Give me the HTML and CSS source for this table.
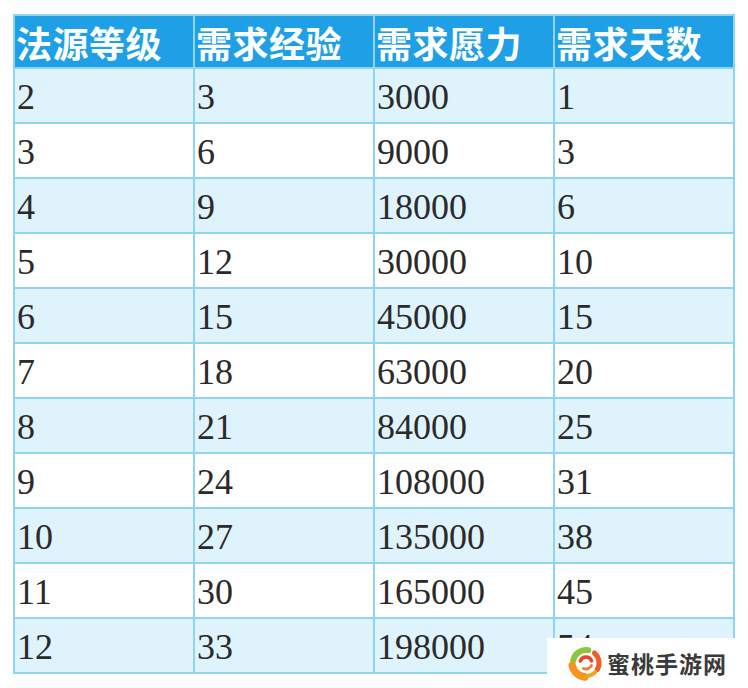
FILE: index.html
```html
<!DOCTYPE html>
<html lang="zh">
<head>
<meta charset="utf-8">
<link rel="stylesheet" href="styles.css">
</head>
<body>
<div class="page">
  <table class="levels">
    <thead>
      <tr><th>法源等级</th><th>需求经验</th><th>需求愿力</th><th>需求天数</th></tr>
    </thead>
    <tbody>
      <tr><td>2</td><td>3</td><td>3000</td><td>1</td></tr>
      <tr><td>3</td><td>6</td><td>9000</td><td>3</td></tr>
      <tr><td>4</td><td>9</td><td>18000</td><td>6</td></tr>
      <tr><td>5</td><td>12</td><td>30000</td><td>10</td></tr>
      <tr><td>6</td><td>15</td><td>45000</td><td>15</td></tr>
      <tr><td>7</td><td>18</td><td>63000</td><td>20</td></tr>
      <tr><td>8</td><td>21</td><td>84000</td><td>25</td></tr>
      <tr><td>9</td><td>24</td><td>108000</td><td>31</td></tr>
      <tr><td>10</td><td>27</td><td>135000</td><td>38</td></tr>
      <tr><td>11</td><td>30</td><td>165000</td><td>45</td></tr>
      <tr><td>12</td><td>33</td><td>198000</td><td>54</td></tr>
    </tbody>
  </table>
  <div class="watermark">
    <svg class="logo" width="38" height="38" viewBox="0 0 38 38">
      <path d="M6.2 16.7 A13 13 0 0 1 21.3 6.2" fill="none" stroke="#8dc63f" stroke-width="6" stroke-linecap="round"/>
      <path d="M5.2 21.4 A14 14 0 0 0 17.8 32.9" fill="none" stroke="#f7941d" stroke-width="7.5" stroke-linecap="round"/>
      <path d="M27.4 9.0 A13 13 0 0 1 30.3 25.5" fill="none" stroke="#f15a29" stroke-width="5" stroke-linecap="round"/>
      <path d="M28.2 28.2 A13 13 0 0 1 20.1 32.0" fill="none" stroke="#f9a11b" stroke-width="4" stroke-linecap="round"/>
      <path d="M13.4 17.0 A6 6 0 0 1 24.6 16.9" fill="none" stroke="#e8452c" stroke-width="3.5" stroke-linecap="round"/>
      <path d="M24.5 21.5 A6 6 0 0 1 16.5 24.5" fill="none" stroke="#f47a3a" stroke-width="3" stroke-linecap="round"/>
    </svg>
    <span class="brand">蜜桃手游网</span>
  </div>
</div>
</body>
</html>
```
FILE: styles.css
```css
html, body {
  margin: 0;
  padding: 0;
  background: #ffffff;
}
.page {
  position: relative;
  width: 748px;
  height: 688px;
  padding: 14px 0 0 13px;
  box-sizing: border-box;
  overflow: hidden;
}
.levels {
  border-collapse: collapse;
  table-layout: fixed;
  width: 722px;
  font-family: "Liberation Serif", "Noto Sans CJK SC", serif;
}
.levels th,
.levels td {
  width: 178px;
  border: 2px solid #8fd4f0;
  padding: 0 0 0 2px;
  text-align: left;
  vertical-align: middle;
  box-sizing: border-box;
  white-space: nowrap;
  overflow: hidden;
}
.levels th {
  height: 53px;
  background: #1e9fe6;
  color: #ffffff;
  font-family: "Noto Sans CJK SC", sans-serif;
  font-weight: 700;
  font-size: 36px;
  line-height: 50px;
  padding-left: 1px;
  letter-spacing: 0.5px;
}
.levels td {
  height: 54px;
  color: #2a2a2a;
  font-size: 36px;
  line-height: 50px;
  padding-top: 3px;
}
.levels tbody tr:nth-child(odd) td {
  background: #dff3fc;
}
.levels tbody tr:nth-child(even) td {
  background: #ffffff;
}
.watermark {
  position: absolute;
  left: 547px;
  top: 638px;
  width: 188px;
  height: 50px;
  background: #ffffff;
  display: flex;
  align-items: center;
  gap: 2px;
  padding-left: 20px;
  box-sizing: border-box;
}
.logo {
  flex: none;
}
.brand {
  font-family: "Noto Sans CJK SC", sans-serif;
  font-weight: 700;
  font-size: 23px;
  letter-spacing: 1px;
  color: #3a3a3a;
}
```
